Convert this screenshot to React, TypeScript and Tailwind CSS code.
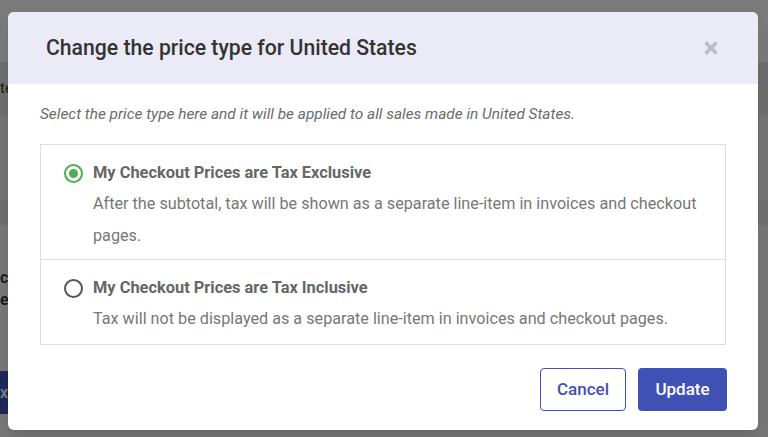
import { useState } from 'react';

type PriceOption = {
    id: string;
    title: string;
    description: string;
};

const OPTIONS: PriceOption[] = [
    {
        id: 'exclusive',
        title: 'My Checkout Prices are Tax Exclusive',
        description:
            'After the subtotal, tax will be shown as a separate line-item in invoices and checkout pages.',
    },
    {
        id: 'inclusive',
        title: 'My Checkout Prices are Tax Inclusive',
        description:
            'Tax will not be displayed as a separate line-item in invoices and checkout pages.',
    },
];

function Radio({ checked }: { checked: boolean }) {
    return (
        <span
            className={
                checked
                    ? 'flex h-[19px] w-[19px] shrink-0 items-center justify-center rounded-full border-[2.5px] border-[#4caf50]'
                    : 'flex h-[19px] w-[19px] shrink-0 items-center justify-center rounded-full border-[2.5px] border-[#555555]'
            }
        >
            {checked && <span className="h-[9px] w-[9px] rounded-full bg-[#4caf50]" />}
        </span>
    );
}

// Page sitting behind the dimmed overlay
function BackgroundPage() {
    return (
        <div className="flex h-full flex-col text-[#333]">
            <div className="h-[62px] bg-[#f5f5f5]" />
            <div className="flex h-[53px] items-center bg-[#dcdcdc] text-[15px]">
                <span>tes</span>
            </div>
            <div className="h-[85px] bg-[#e8e8e8]" />
            <div className="h-[25px] bg-[#dedede]" />
            <div className="flex flex-1 flex-col bg-[#eeeeee]">
                <div className="mt-[42px] text-[16px] font-semibold leading-[22px]">
                    <p>c</p>
                    <p>er</p>
                </div>
                <div className="mt-[60px] flex h-[43px] w-[60px] items-center bg-[#3f51b5] text-[16px] font-medium text-white">
                    x
                </div>
            </div>
        </div>
    );
}

export default function App() {
    const [selected, setSelected] = useState('exclusive');

    return (
        <div
            className="relative h-[437px] w-[768px] overflow-hidden"
            style={{ fontFamily: 'Roboto, "Liberation Sans", sans-serif' }}
        >
            <BackgroundPage />
            <div className="absolute inset-0 bg-black/50" />

            {/* Modal */}
            <div className="absolute left-[8px] top-[12px] flex w-[750px] flex-col overflow-hidden rounded-[6px] bg-white shadow-lg">
                <div className="flex h-[72px] items-center justify-between bg-[#ebebf7] pl-[38px] pr-[39px]">
                    <h2 className="text-[21.2px] font-medium text-[#333]">
                        Change the price type for United States
                    </h2>
                    <button className="flex h-[16px] w-[16px] items-center justify-center">
                        <svg viewBox="0 0 16 16" className="h-[16px] w-[16px]">
                            <path
                                d="M2.5 2.5 L13.5 13.5 M13.5 2.5 L2.5 13.5"
                                stroke="#bbbbc6"
                                strokeWidth="3.2"
                                strokeLinecap="butt"
                                fill="none"
                            />
                        </svg>
                    </button>
                </div>

                <div className="px-[32px] pt-[20px]">
                    <p className="text-[15.4px] italic leading-[20px] text-[#6b6b6b]">
                        Select the price type here and it will be applied to all sales made in United States.
                    </p>

                    <div className="mt-[20px] border border-[#dddddd]">
                        {OPTIONS.map((opt, i) => (
                            <label
                                key={opt.id}
                                onClick={() => setSelected(opt.id)}
                                className={
                                    i > 0
                                        ? 'flex cursor-pointer gap-[10px] border-t border-[#dddddd] pb-[9px] pl-[23px] pr-[24px] pt-[18px]'
                                        : 'flex cursor-pointer gap-[10px] pb-[7px] pl-[23px] pr-[24px] pt-[18px]'
                                }
                            >
                                <div className="flex h-[20px] items-center">
                                    <Radio checked={selected === opt.id} />
                                </div>
                                <div className="flex flex-col">
                                    <span className="text-[16.4px] font-bold leading-[20px] text-[#666]">
                                        {opt.title}
                                    </span>
                                    <span className="mt-[5px] text-[16.2px] leading-[32px] text-[#777]">
                                        {opt.description}
                                    </span>
                                </div>
                            </label>
                        ))}
                    </div>
                </div>

                <div className="flex justify-end gap-[12px] px-[31px] pb-[19px] pt-[23px]">
                    <button className="h-[43px] w-[86px] rounded-[4px] border border-[#3f51b5] text-[17px] font-medium text-[#3f51b5]">
                        Cancel
                    </button>
                    <button className="h-[43px] w-[89px] rounded-[4px] bg-[#3f51b5] text-[17px] font-medium text-white">
                        Update
                    </button>
                </div>
            </div>
        </div>
    );
}
